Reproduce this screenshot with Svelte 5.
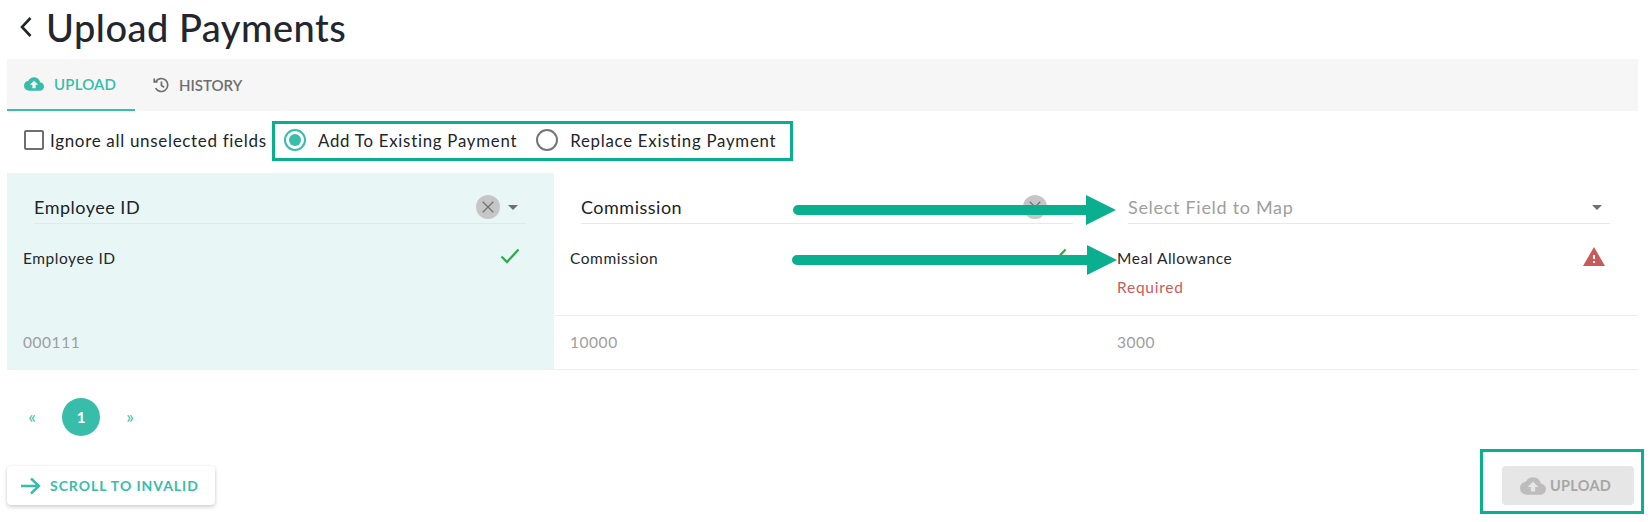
<script>
  const columns = [
    { field: 'Employee ID', label: 'Employee ID', value: '000111', active: true, status: 'ok' },
    { field: 'Commission', label: 'Commission', value: '10000', active: false, status: 'ok' },
    { field: '', label: 'Meal Allowance', value: '3000', active: false, status: 'error' }
  ];
</script>

<div class="page">
  <header class="title-row">
    <svg class="back" viewBox="0 0 14 22" width="14" height="22"><path d="M11.5 2 3 11l8.500 9" /></svg>
    <h1>Upload Payments</h1>
  </header>

  <nav class="tabs">
    <div class="tab active">
      <svg viewBox="0 0 24 24" width="20" height="20"><path fill-rule="evenodd" d="M14 13v4h-4v-4H7l5-5 5 5zM19.350 10.030C18.670 6.590 15.640 4 12 4 9.110 4 6.600 5.640 5.350 8.030 2.340 8.360 0 10.900 0 14a6 6 0 0 0 6 6h13a5 5 0 0 0 5-5c0-2.640-2.050-4.780-4.650-4.970z" /></svg>
      <span>UPLOAD</span>
    </div>
    <div class="tab">
      <svg class="hist" viewBox="0 0 20 20" width="18" height="18"><path d="M4.300 6A7.200 7.200 0 1 1 4 13.500" /><path d="M2.500 2.800V6.500H6.200" /><path d="M10.500 6v4.500l3 2" /></svg>
      <span>HISTORY</span>
    </div>
  </nav>

  <div class="options">
    <label class="ignore"><span class="checkbox"></span>Ignore all unselected fields</label>
    <div class="radios">
      <label class="radio"><span class="dot on"></span>Add To Existing Payment</label>
      <label class="radio"><span class="dot"></span>Replace Existing Payment</label>
    </div>
  </div>

  <section class="table">
    {#each columns as c}
      <div class="col" class:active={c.active}>
        <div class="select">
          <span class:placeholder={!c.field}>{c.field || 'Select Field to Map'}</span>
          {#if c.field}
            <span class="clear"><svg viewBox="0 0 24 24" width="18" height="18"><path d="M5 5l14 14M19 5 5 19" /></svg></span>
          {/if}
          <svg class="caret" viewBox="0 0 24 24" width="24" height="24"><path d="M7 10l5 5 5-5z" /></svg>
        </div>
        <div class="head">
          <div class="label-row">
            <span>{c.label}</span>
            {#if c.status === 'ok'}
              <svg class="check" viewBox="0 0 24 24" width="24" height="24"><path d="M3.500 12.500 9 18 20.500 5.500" /></svg>
            {:else}
              <svg class="warn" viewBox="0 0 24 24" width="24" height="24"><path d="M13 14h-2v-4h2m0 8h-2v-2h2M1 21h22L12 2z" fill-rule="evenodd" /></svg>
            {/if}
          </div>
          {#if c.status === 'error'}<div class="required">Required</div>{/if}
        </div>
        <div class="cell">{c.value}</div>
      </div>
    {/each}
  </section>

  <div class="pagination">
    <span class="pg">«</span>
    <span class="current">1</span>
    <span class="pg">»</span>
  </div>

  <footer class="actions">
    <button class="scroll">
      <svg viewBox="0 0 20 18" width="20" height="18"><path d="M0 9h18M10 1.500 18 9l-8 7.500" /></svg>
      SCROLL TO INVALID
    </button>
    <button class="upload">
      <svg viewBox="0 0 24 24" width="26" height="26"><path fill-rule="evenodd" d="M14 13v4h-4v-4H7l5-5 5 5zM19.350 10.030C18.670 6.590 15.640 4 12 4 9.110 4 6.600 5.640 5.350 8.030 2.340 8.360 0 10.900 0 14a6 6 0 0 0 6 6h13a5 5 0 0 0 5-5c0-2.640-2.050-4.780-4.650-4.970z" /></svg>
      UPLOAD
    </button>
  </footer>

  <!-- annotations drawn over the screenshot -->
  <div class="mark mark-radios"></div>
  <div class="mark mark-upload"></div>
  <svg class="arrows" width="1651" height="522" viewBox="0 0 1651 522">
    <path d="M798 210H1090" class="shaft" /><path d="M1086 195 1116 210 1086 225z" class="arrowhead" />
    <path d="M797 260H1090" class="shaft" /><path d="M1087 245 1117 260 1087 275z" class="arrowhead" />
  </svg>
</div>

<style>
  :global(body) {
    margin: 0;
    background: #fff;
    font-family: Lato, "Open Sans", sans-serif;
    color: #212529;
  }
  .page {
    position: relative;
    width: 1631px;
    height: 522px;
    padding: 0 13px 0 7px;
    overflow: hidden;
    box-sizing: content-box;
  }
  .title-row {
    height: 53px;
    padding: 0 0 6px 12px;
    display: flex;
    align-items: center;
  }
  .back { fill: none; stroke: #212529; stroke-width: 2.6; margin-right: 13px; }
  h1 {
    margin: 0;
    font-size: 38px;
    font-weight: 500;
    letter-spacing: 0.5px;
    color: #22262e;
  }
  .tabs {
    display: flex;
    height: 52px;
    background: #f6f6f6;
  }
  .tab {
    display: flex;
    align-items: center;
    gap: 9px;
    padding: 0 18px 0 17px;
    font-size: 15px;
    font-weight: 600;
    color: #6f6f6f;
    box-sizing: border-box;
    height: 52px;
    fill: #6f6f6f;
  }
  .tab span { margin-top: -1px; }
  .tab.active {
    width: 128px;
    gap: 10px;
    color: #37bda9;
    fill: #37bda9;
    border-bottom: 2px solid #37bda9;
    letter-spacing: 0.2px;
  }
  .hist { fill: none; stroke: #6f6f6f; stroke-width: 1.900; }
  .options {
    height: 58px;
    padding: 0 0 4px 17px;
    display: flex;
    align-items: center;
    font-size: 17px;
    letter-spacing: 0.68px;
  }
  .ignore { display: flex; align-items: center; gap: 6px; width: 266px; }
  .checkbox {
    width: 16px;
    height: 16px;
    border: 2px solid #6f6f6f;
    border-radius: 2px;
    flex: none;
  }
  .radios { display: flex; align-items: center; margin-left: -6px; }
  .radio { display: flex; align-items: center; gap: 12px; margin-right: 19px; font-size: 16.800px; letter-spacing: 0.76px; }
  .dot {
    width: 18px;
    height: 18px;
    border: 2px solid #757575;
    border-radius: 50%;
    display: flex;
    align-items: center;
    justify-content: center;
    flex: none;
  }
  .dot.on { border-color: #37bda9; }
  .dot.on::after {
    content: "";
    width: 12px;
    height: 12px;
    border-radius: 50%;
    background: #37bda9;
  }
  .table {
    display: grid;
    grid-template-columns: 547px 547px 1fr;
  }
  .col.active { background: #e9f6f6; }
  .select {
    display: flex;
    align-items: center;
    height: 32px;
    padding-top: 2px;
    margin: 16px 28px 0 27px;
    border-bottom: 1px solid #e8e8e8;
    font-size: 18px;
    letter-spacing: 0.5px;
    color: #1e2229;
  }
  .col:first-child .select { border-bottom-color: #dfeaea; }
  .select > span:first-child { flex: 1; }
  .placeholder { color: #9e9e9e; letter-spacing: 0.7px; }
  .clear {
    width: 24px;
    height: 24px;
    border-radius: 50%;
    background: #c6c6c6;
    display: flex;
    align-items: center;
    justify-content: center;
    margin: 0 1px 0 0;
    stroke: #6f6f6f;
    stroke-width: 1.600;
  }
  .caret { fill: #6f6f6f; margin: 0 1px 0 0; }
  .head {
    height: 92px;
    padding: 24px 35px 0 16px;
    box-sizing: border-box;
    border-bottom: 1px solid #eee;
    font-size: 15.500px;
    letter-spacing: 0.55px;
  }
  .col.active .head { border-bottom-color: transparent; }
  .label-row {
    display: flex;
    justify-content: space-between;
    align-items: center;
    height: 20px;
  }
  .label-row > span { color: #23272e; }
  .check { fill: none; stroke: #2eaa4f; stroke-width: 2.300; margin-right: -3px; margin-top: -4px; }
  .warn { fill: #c85a5a; margin: -2px -3px 0 0; }
  .required { margin-top: 9px; line-height: 20px; color: #cb5a5a; letter-spacing: 0.75px; }
  .cell {
    height: 54px;
    box-sizing: border-box;
    padding: 0 0 2px 16px;
    display: flex;
    align-items: center;
    border-bottom: 1px solid #eee;
    font-size: 15.500px;
    letter-spacing: 0.55px;
    color: #9e9e9e;
  }
  .col.active .cell { border-bottom-color: transparent; }
  .pagination {
    display: flex;
    align-items: center;
    height: 38px;
    margin-top: 28px;
    padding-left: 19px;
    color: #37bda9;
  }
  .pg { width: 12px; text-align: center; font-size: 18px; margin-top: -2px; }
  .current {
    width: 38px;
    height: 38px;
    margin: 0 24px;
    border-radius: 50%;
    background: #37bda9;
    color: #fff;
    display: flex;
    align-items: center;
    justify-content: center;
    font-weight: 700;
    font-size: 15px;
  }
  .actions {
    display: flex;
    justify-content: space-between;
    margin-top: 30px;
  }
  button {
    display: flex;
    align-items: center;
    height: 39px;
    border: 0;
    border-radius: 4px;
    font-family: inherit;
    font-weight: 700;
    font-size: 14px;
    padding: 0;
  }
  .scroll {
    width: 208px;
    padding-left: 14px;
    gap: 9px;
    background: #fff;
    color: #37bda9;
    letter-spacing: 0.95px;
    box-shadow: 0 2px 4px rgba(0, 0, 0, 0.18), 0 0 2px rgba(0, 0, 0, 0.08);
  }
  .scroll svg { fill: none; stroke: #37bda9; stroke-width: 2.400; }
  .upload {
    width: 132px;
    margin-right: 4px;
    padding-left: 18px;
    gap: 4px;
    background: #e6e6e6;
    color: #a6a6a6;
    letter-spacing: 0.3px;
    font-size: 14.500px;
  }
  .upload svg { fill: #bdbdbd; }
  .mark {
    position: absolute;
    box-sizing: border-box;
    border: 3px solid #09af8f;
  }
  .mark-radios { left: 272px; top: 121px; width: 521px; height: 40px; }
  .mark-upload { left: 1480px; top: 449px; width: 164px; height: 65px; }
  .arrows { position: absolute; left: 0; top: 0; pointer-events: none; }
  .shaft { stroke: #09af8f; stroke-width: 10; stroke-linecap: round; fill: none; }
  .arrowhead { fill: #09af8f; }
</style>
